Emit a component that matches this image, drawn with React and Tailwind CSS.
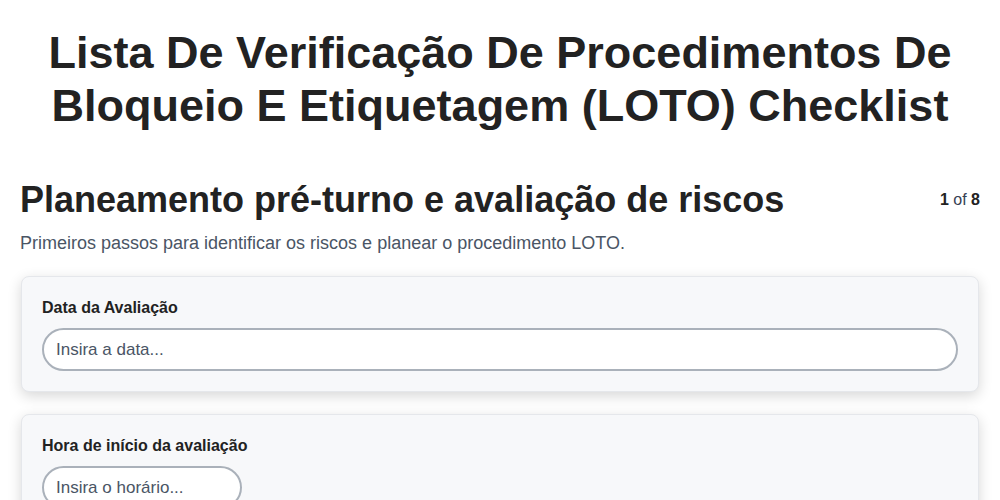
export default function App() {
  const fields = [
    { label: "Data da Avaliação", placeholder: "Insira a data...", full: true },
    { label: "Hora de início da avaliação", placeholder: "Insira o horário...", full: false },
  ];

  return (
    <div className="min-h-screen bg-white font-['Liberation_Sans',Arial,sans-serif] text-[#222]">
      <div className="px-5">
        <h1 className="pt-[26px] text-center text-[45px] font-bold leading-[53px]">
          Lista De Verificação De Procedimentos De Bloqueio E Etiquetagem (LOTO) Checklist
        </h1>

        <div className="mt-[46px] flex items-start justify-between">
          <h2 className="text-[36px] font-bold leading-[44px]">
            Planeamento pré-turno e avaliação de riscos
          </h2>
          <div className="pt-[10px] text-[16px] text-gray-700">
            <span className="font-bold text-[#222]">1</span> of{" "}
            <span className="font-bold text-[#222]">8</span>
          </div>
        </div>
        <p className="mt-[9px] text-[18px] leading-[24px] text-gray-600">
          Primeiros passos para identificar os riscos e planear o procedimento LOTO.
        </p>

        <div className="mt-[21px] space-y-[22px]">
          {fields.map((f) => (
            <div
              key={f.label}
              className="mx-px rounded-lg border border-gray-200 bg-[#f7f8fa] p-5 shadow-[0_4px_14px_rgba(0,0,0,0.16)]"
            >
              <label className="mb-[10px] block text-[16px] font-bold leading-[21px] text-[#222]">
                {f.label}
              </label>
              <input
                type="text"
                placeholder={f.placeholder}
                className={`h-[43px] rounded-full border-2 border-[#aab1ba] bg-white px-3 text-[17px] placeholder:text-gray-600 outline-none ${
                  f.full ? "w-full" : "w-[200px]"
                }`}
              />
            </div>
          ))}
        </div>
      </div>
    </div>
  );
}
